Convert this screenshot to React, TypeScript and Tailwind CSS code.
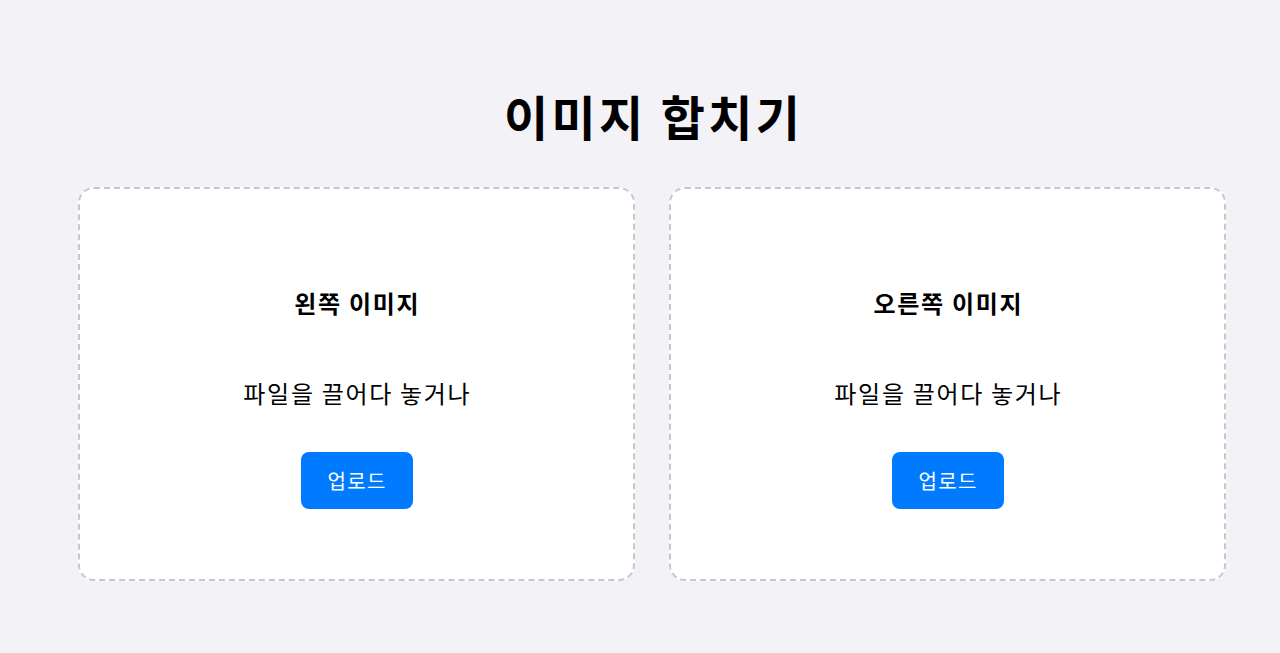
import React from "react";

function DropZone({ title }: { title: string }) {
  return (
    <div className="flex flex-col items-center rounded-2xl border-2 border-dashed border-[#c8c8cc] bg-white pt-[96px] pb-[70px]">
      <h2 className="pl-[0.07em] text-2xl leading-9 font-bold tracking-[0.07em] text-black">{title}</h2>
      <p className="mt-[54px] pl-[0.07em] text-2xl leading-9 tracking-[0.07em] text-black">
        파일을 끌어다 놓거나
      </p>
      <button
        type="button"
        className="mt-[41px] h-[57px] w-[112px] rounded-lg bg-[#007bff] pl-[0.07em] text-xl tracking-[0.07em] text-white"
      >
        업로드
      </button>
    </div>
  );
}

export default function App() {
  return (
    <div
      className="min-h-screen bg-[#f2f2f7] pl-[78px] pr-[54px]"
      style={{ fontFamily: '"Noto Sans CJK KR", "Noto Sans", sans-serif' }}
    >
      <h1 className="pt-[86px] pl-[0.07em] text-center text-5xl leading-[58px] font-bold tracking-[0.07em] text-black">
        이미지 합치기
      </h1>
      <div className="mt-[43px] grid grid-cols-2 gap-[34px]">
        <DropZone title="왼쪽 이미지" />
        <DropZone title="오른쪽 이미지" />
      </div>
    </div>
  );
}
